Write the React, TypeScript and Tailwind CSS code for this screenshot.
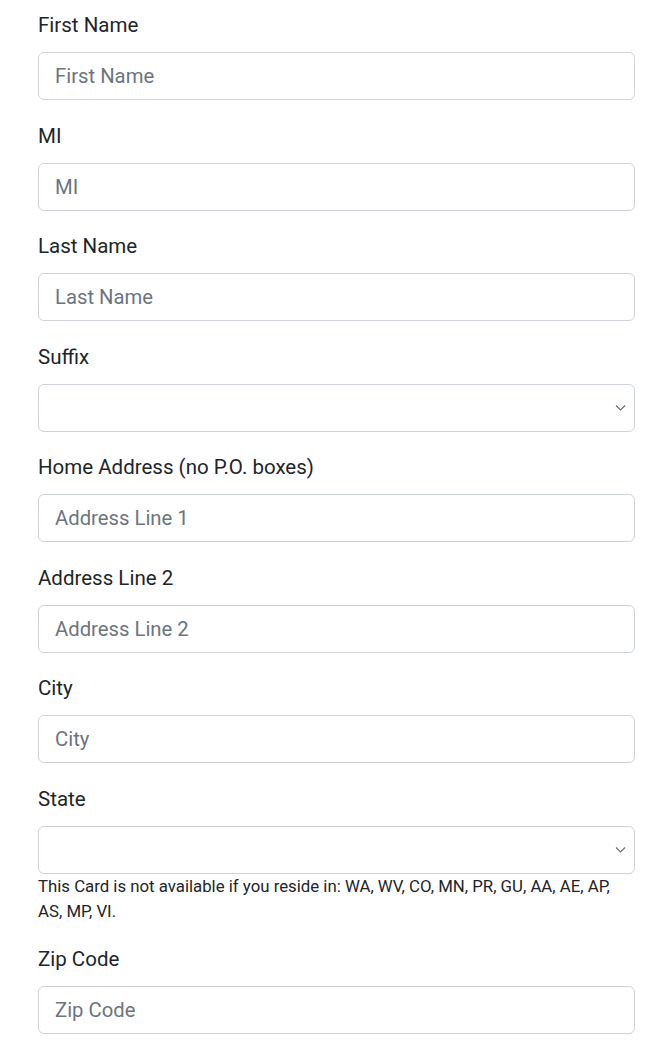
import React from "react";

const font = { fontFamily: "Roboto, 'Liberation Sans', sans-serif" };

function Chevron() {
  return (
    <svg width="11" height="7" viewBox="0 0 11 7" className="absolute right-[8px] top-1/2 -translate-y-1/2" fill="none">
      <path d="M1 1l4.5 4.5L10 1" stroke="#6b6b6b" strokeWidth="1.1" />
    </svg>
  );
}

function Field({ label, placeholder, select, note }: { label: string; placeholder?: string; select?: boolean; note?: React.ReactNode }) {
  return (
    <div className="flex flex-col">
      <label className="text-[20.5px] leading-[30px] text-[#212529] mb-[12px]">{label}</label>
      {select ? (
        <div className="relative h-[48px] rounded-[6px] border border-[#ced4da] bg-white">
          <Chevron />
        </div>
      ) : (
        <input
          className="h-[48px] rounded-[6px] border border-[#ced4da] bg-white px-[16px] text-[20.3px] text-[#212529] placeholder:text-[#6c757d] outline-none"
          style={font}
          placeholder={placeholder}
        />
      )}
      {note}
    </div>
  );
}

export default function App() {
  return (
    <div className="bg-white w-[670px] min-h-[1048px] px-[38px] pt-[10px] text-[#212529]" style={font}>
      <div className="flex flex-col w-[597px] gap-[20.5px]">
        <Field label="First Name" placeholder="First Name" />
        <Field label="MI" placeholder="MI" />
        <Field label="Last Name" placeholder="Last Name" />
        <Field label="Suffix" select />
        <Field label="Home Address (no P.O. boxes)" placeholder="Address Line 1" />
        <Field label="Address Line 2" placeholder="Address Line 2" />
        <Field label="City" placeholder="City" />
        <Field
          label="State"
          select
          note={
            <p className="text-[16.8px] leading-[25px] text-[#212529] mt-0">
              This Card is not available if you reside in: WA, WV, CO, MN, PR, GU, AA, AE, AP, AS, MP, VI.
            </p>
          }
        />
        <Field label="Zip Code" placeholder="Zip Code" />
      </div>
    </div>
  );
}
